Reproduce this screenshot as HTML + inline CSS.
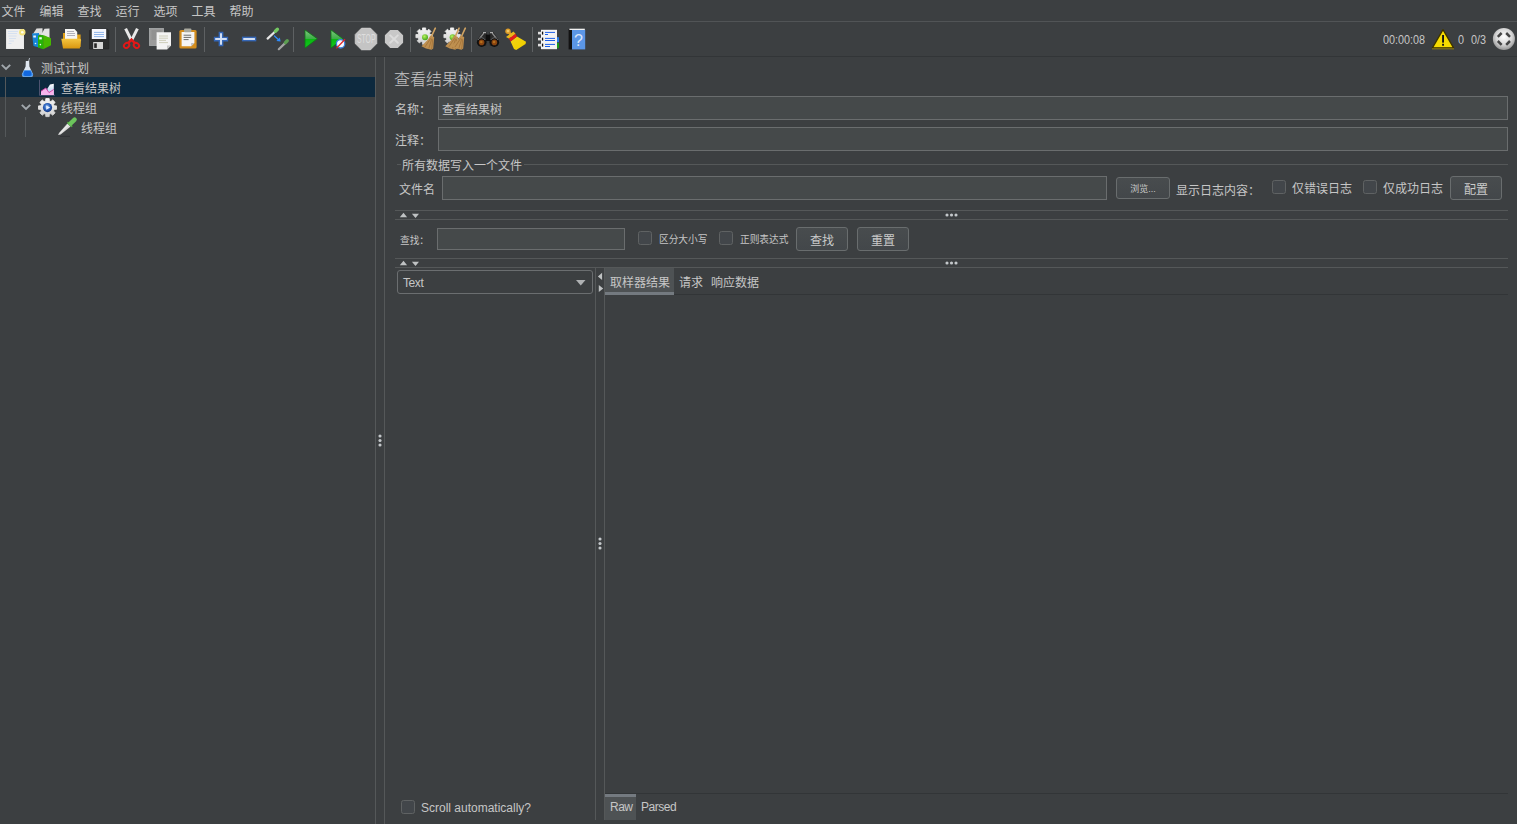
<!DOCTYPE html>
<html lang="zh-CN">
<head>
<meta charset="utf-8">
<title>Apache JMeter</title>
<style>
*{box-sizing:border-box;margin:0;padding:0}
html,body{width:1517px;height:824px;overflow:hidden;background:#3c3f41}
body{position:relative;font-family:"Liberation Sans","Noto Sans CJK SC",sans-serif;font-size:12px;color:#c6c6c6;line-height:1}
.abs{position:absolute}
.t{position:absolute;white-space:nowrap;line-height:16px;height:16px}
.hl{position:absolute;height:1px;background:#555859}
.vl{position:absolute;width:1px;background:#555859}
.inp{position:absolute;background:#45494a;border:1px solid #6a6d6e}
.btn{position:absolute;border:1px solid #696d6e;border-radius:3px;background:linear-gradient(#484c4e,#43474a);text-align:center;color:#cacaca}
.cb{position:absolute;width:14px;height:14px;border:1px solid #5f6263;border-radius:2.5px;background:#42464a}
.ico{position:absolute;overflow:visible}
#menubar{left:0;top:0;width:1517px;height:21px}
#menubar span{position:absolute;top:4px;margin-left:-0.5px;line-height:16px;font-size:12px}
</style>
</head>
<body>

<!-- MENU BAR -->
<div id="menubar" class="abs">
<span style="left:2px">文件</span>
<span style="left:40px">编辑</span>
<span style="left:78px">查找</span>
<span style="left:116px">运行</span>
<span style="left:154px">选项</span>
<span style="left:192px">工具</span>
<span style="left:230px">帮助</span>
</div>
<div class="hl" style="left:0;top:21px;width:1517px;background:#515456"></div>

<!-- TOOLBAR -->
<div id="toolbar" class="abs" style="left:0;top:22px;width:1517px;height:34px"></div>
<div class="hl" style="left:0;top:56px;width:1517px;background:#323537"></div>

<!-- TREE -->
<div id="tree" class="abs" style="left:0;top:57px;width:375px;height:767px">
  <div class="abs" style="left:0;top:20px;width:375px;height:20px;background:#0d293e"></div>
  <div class="vl" style="left:5px;top:20px;height:60px;background:#54585a"></div>
  <div class="vl" style="left:25px;top:60px;height:20px;background:#54585a"></div>
  <div class="t" style="left:41px;top:4px">测试计划</div>
  <div class="t" style="left:61px;top:24px">查看结果树</div>
  <div class="t" style="left:61px;top:44px">线程组</div>
  <div class="t" style="left:81px;top:64px">线程组</div>
</div>
<div class="vl" style="left:375px;top:57px;height:767px"></div>
<div class="vl" style="left:384px;top:57px;height:767px"></div>

<!-- RIGHT PANEL -->
<div class="t" style="left:394px;top:69px;font-size:16px;line-height:22px;height:22px;font-weight:300">查看结果树</div>
<div class="t" style="left:395px;top:102px">名称：</div>
<div class="inp" style="left:438px;top:96px;width:1070px;height:24px"></div>
<div class="t" style="left:442px;top:102px">查看结果树</div>
<div class="t" style="left:395px;top:133px">注释：</div>
<div class="inp" style="left:438px;top:127px;width:1070px;height:24px"></div>

<!-- titled border: write all data to file -->
<div class="hl" style="left:397px;top:164px;width:4px"></div>
<div class="hl" style="left:524px;top:164px;width:984px"></div>
<div class="t" style="left:402px;top:157.5px">所有数据写入一个文件</div>
<div class="t" style="left:399px;top:181.5px">文件名</div>
<div class="inp" style="left:442px;top:176px;width:665px;height:24px"></div>
<div class="btn" style="left:1116px;top:177px;width:54px;height:22px;font-size:9px;line-height:22px;overflow:hidden">浏览...</div>
<div class="t" style="left:1176px;top:182.5px">显示日志内容：</div>
<div class="cb" style="left:1272px;top:180px"></div>
<div class="t" style="left:1292px;top:181px">仅错误日志</div>
<div class="cb" style="left:1363px;top:180px"></div>
<div class="t" style="left:1383px;top:181px">仅成功日志</div>
<div class="btn" style="left:1450px;top:176px;width:52px;height:24px;line-height:26px;overflow:hidden">配置</div>

<!-- split divider 1 -->
<div class="hl" style="left:395px;top:210px;width:1113px"></div>
<div class="hl" style="left:395px;top:219px;width:1113px"></div>
<svg class="ico" style="left:399px;top:212px" width="22" height="7" viewBox="0 0 22 7"><path d="M0.8 5.2 L4.5 0.8 L8.1 5.2Z M12.9 1.7 L20 1.7 L16.5 6Z" fill="#bfc2c3"/></svg>
<svg class="ico" style="left:945px;top:213px" width="14" height="4" viewBox="0 0 14 4"><circle cx="2" cy="2" r="1.55" fill="#c4c8cb"/><circle cx="6.5" cy="2" r="1.55" fill="#c4c8cb"/><circle cx="11" cy="2" r="1.55" fill="#c4c8cb"/></svg>

<!-- search row -->
<div class="t" style="left:400px;top:232.5px;font-size:9.7px">查找：</div>
<div class="inp" style="left:437px;top:228px;width:188px;height:22px"></div>
<div class="cb" style="left:638px;top:231px"></div>
<div class="t" style="left:659px;top:231.5px;font-size:9.7px">区分大小写</div>
<div class="cb" style="left:719px;top:231px"></div>
<div class="t" style="left:740px;top:231.5px;font-size:9.7px">正则表达式</div>
<div class="btn" style="left:796px;top:227px;width:52px;height:24px;line-height:26px;overflow:hidden">查找</div>
<div class="btn" style="left:857px;top:227px;width:52px;height:24px;line-height:26px;overflow:hidden">重置</div>

<!-- split divider 2 -->
<div class="hl" style="left:395px;top:258px;width:1113px"></div>
<div class="hl" style="left:395px;top:267px;width:1113px"></div>
<svg class="ico" style="left:399px;top:260px" width="22" height="7" viewBox="0 0 22 7"><path d="M0.8 5.2 L4.5 0.8 L8.1 5.2Z M12.9 1.7 L20 1.7 L16.5 6Z" fill="#bfc2c3"/></svg>
<svg class="ico" style="left:945px;top:261px" width="14" height="4" viewBox="0 0 14 4"><circle cx="2" cy="2" r="1.55" fill="#c4c8cb"/><circle cx="6.5" cy="2" r="1.55" fill="#c4c8cb"/><circle cx="11" cy="2" r="1.55" fill="#c4c8cb"/></svg>

<!-- combo -->
<div class="abs" style="left:397px;top:270px;width:196px;height:24px;border:1px solid #6b6e70;border-radius:3px;background:#3c3f41"></div>
<div class="t" style="left:403px;top:275px;letter-spacing:-0.4px">Text</div>
<svg class="ico" style="left:576px;top:280px" width="10" height="6" viewBox="0 0 10 6"><path d="M0 0 L9.5 0 L4.75 5.5Z" fill="#afb1b3"/></svg>

<!-- vertical split -->
<div class="vl" style="left:595px;top:268px;height:552px"></div>
<div class="vl" style="left:604px;top:268px;height:552px"></div>
<svg class="ico" style="left:597px;top:271px" width="7" height="22" viewBox="0 0 7 22"><path d="M5.1 1.8 L5.1 9 L0.9 5.4Z M1.8 14 L1.8 21 L6.2 17.5Z" fill="#bfc2c3"/></svg>

<!-- tabs -->
<div class="abs" style="left:605px;top:268px;width:69px;height:27px;background:#4e5254"></div>
<div class="abs" style="left:605px;top:292px;width:69px;height:3px;background:#747a80"></div>
<div class="hl" style="left:674px;top:294px;width:834px;background:#323537"></div>
<div class="t" style="left:610px;top:275px">取样器结果</div>
<div class="t" style="left:679px;top:275px">请求</div>
<div class="t" style="left:711px;top:275px">响应数据</div>

<!-- bottom tabs -->
<div class="hl" style="left:605px;top:793px;width:903px;background:#323537"></div>
<div class="abs" style="left:605px;top:794px;width:31px;height:26px;background:#4e5254"></div>
<div class="abs" style="left:605px;top:794px;width:31px;height:3px;background:#747a80"></div>
<div class="t" style="left:610px;top:799px;letter-spacing:-0.5px">Raw</div>
<div class="t" style="left:641px;top:799px;letter-spacing:-0.45px">Parsed</div>

<div class="cb" style="left:401px;top:800px"></div>
<div class="t" style="left:421px;top:800px">Scroll automatically?</div>

<!-- splitter dots -->
<svg class="ico" style="left:378px;top:434px" width="4" height="13" viewBox="0 0 4 13"><circle cx="2" cy="2" r="1.55" fill="#c4c8cb"/><circle cx="2" cy="6.5" r="1.55" fill="#c4c8cb"/><circle cx="2" cy="11" r="1.55" fill="#c4c8cb"/></svg>
<svg class="ico" style="left:598px;top:537px" width="4" height="13" viewBox="0 0 4 13"><circle cx="2" cy="2" r="1.55" fill="#c4c8cb"/><circle cx="2" cy="6.5" r="1.55" fill="#c4c8cb"/><circle cx="2" cy="11" r="1.55" fill="#c4c8cb"/></svg>

<!-- status right -->
<div class="t" style="left:1383px;top:31.7px;font-size:12.5px;transform:scaleX(0.865);transform-origin:0 0">00:00:08</div>
<div class="t" style="left:1458px;top:31.7px;font-size:12.5px;transform:scaleX(0.865);transform-origin:0 0">0</div>
<div class="t" style="left:1471px;top:31.7px;font-size:12.5px;transform:scaleX(0.865);transform-origin:0 0">0/3</div>

<!-- ICONS -->
<svg class="ico" style="left:0;top:0" width="1517" height="140" viewBox="0 0 1517 140">
<defs>
<linearGradient id="gPlay" x1="0" y1="0" x2="0" y2="1"><stop offset="0" stop-color="#80c880"/><stop offset="0.48" stop-color="#3cae46"/><stop offset="0.52" stop-color="#0ab812"/><stop offset="1" stop-color="#12c81e"/></linearGradient>
<linearGradient id="gFold" x1="0" y1="0" x2="0" y2="1"><stop offset="0" stop-color="#f4c540"/><stop offset="1" stop-color="#d9960f"/></linearGradient>
<linearGradient id="gBroom" x1="0" y1="0" x2="1" y2="1"><stop offset="0" stop-color="#f2d21a"/><stop offset="0.7" stop-color="#f0d000"/><stop offset="1" stop-color="#d0a000"/></linearGradient>
<radialGradient id="gBall" cx="0.45" cy="0.4" r="0.6"><stop offset="0" stop-color="#9cc4f4"/><stop offset="0.5" stop-color="#2f66c0"/><stop offset="1" stop-color="#10337e"/></radialGradient>
<radialGradient id="gSph" cx="0.5" cy="0.4" r="0.6"><stop offset="0" stop-color="#ffffff"/><stop offset="0.6" stop-color="#d6d6d6"/><stop offset="1" stop-color="#969696"/></radialGradient>
<radialGradient id="gGreen" cx="0.4" cy="0.35" r="0.7"><stop offset="0" stop-color="#b8f060"/><stop offset="1" stop-color="#3aa010"/></radialGradient>
<linearGradient id="gBlueA" x1="0" y1="0" x2="0" y2="1"><stop offset="0" stop-color="#ffffff"/><stop offset="1" stop-color="#9cc0ee"/></linearGradient>
<linearGradient id="gGear" x1="0" y1="0" x2="0" y2="1"><stop offset="0" stop-color="#f4f4f4"/><stop offset="1" stop-color="#d0d0d0"/></linearGradient>
</defs>
<rect x="115.0" y="27" width="1" height="25" fill="#5e6163"/>
<rect x="204.0" y="27" width="1" height="25" fill="#5e6163"/>
<rect x="293.0" y="27" width="1" height="25" fill="#5e6163"/>
<rect x="410.0" y="27" width="1" height="25" fill="#5e6163"/>
<rect x="471.0" y="27" width="1" height="25" fill="#5e6163"/>
<rect x="532.0" y="27" width="1" height="25" fill="#5e6163"/>
<g><rect x="6.6" y="29.4" width="17" height="19.2" fill="#efefef" stroke="#fafafa" stroke-width="0.8"/><path d="M8 31.5h10M8 33.5h9M8.5 36h8M9 38.5h7M9 41h5M8.5 43.5h3" stroke="#d3dff0" stroke-width="0.9"/><circle cx="22.3" cy="32.3" r="3.2" fill="#f3e27a"/><circle cx="22.3" cy="32.3" r="1.3" fill="#fffef0"/></g>
<g><polygon points="33,34 36.5,28.5 42.5,28.2 42.5,35" fill="#dcdcdc"/><polygon points="41,35 44.5,28.8 49.5,28.5 49.5,38" fill="#e4e4e4"/><polygon points="32,33.5 39,33 39,47.5 33.5,46" fill="#1686d8"/><rect x="33.3" y="35.5" width="2.6" height="2" fill="#e8f2ff"/><circle cx="35.5" cy="43.5" r="0.8" fill="#e8f2ff"/><polygon points="38,35.5 43.2,35 43.2,49.2 38,47.6" fill="#27b408"/><polygon points="43.2,35 51,38.3 51,45.2 43.2,49.2" fill="#46b800"/><rect x="39.2" y="37.2" width="2.6" height="2.2" fill="#eaffea"/><circle cx="40.4" cy="44.6" r="0.8" fill="#eaffea"/></g>
<g><polygon points="63,33 68,33 69,34.5 80.6,34.5 80.6,47 63,47" fill="#dfa018"/><polygon points="65,29 74.5,29 77.2,32 77.2,41 65,41" fill="#f6f6f6"/><path d="M67 31.5h7M67 33.5h8M67 35.5h8" stroke="#a9a9b4" stroke-width="0.9"/><path d="M61.3,38.8 L79.8,38.8 Q81.2,38.8 81,40.2 L79.8,48.6 L63,48.6 Z" fill="url(#gFold)"/></g>
<g><path d="M89.5,30.5 L91,29.2 L107.5,29.2 L108.8,30.5 L108.8,49 L89.5,49 Z" fill="#2c2d2e" stroke="#232425" stroke-width="0.6"/><rect x="91.8" y="29" width="14.4" height="10" fill="#f5f7fd"/><path d="M94 32.4h10M94 34.5h10M94 36.6h10" stroke="#8fb4ea" stroke-width="1"/><rect x="93.2" y="42" width="9.8" height="7" fill="#d6d6d6"/><rect x="94.2" y="43.3" width="2.6" height="4.6" fill="#252525"/></g>
<g fill="none"><path d="M125.6,28.6 L131.6,40.6" stroke="#e8e8e8" stroke-width="3"/><path d="M137.4,28.6 L131.4,40.6" stroke="#e8e8e8" stroke-width="3"/><path d="M131.5,39.6 L128.6,42.6 M131.5,39.6 L134.4,42.6" stroke="#e01818" stroke-width="2.4" stroke-linecap="round"/><ellipse cx="126.6" cy="45.4" rx="2.9" ry="2.3" transform="rotate(-40 126.6 45.4)" stroke="#e01818" stroke-width="1.9"/><ellipse cx="136.4" cy="45.4" rx="2.9" ry="2.3" transform="rotate(40 136.4 45.4)" stroke="#e01818" stroke-width="1.9"/></g>
<g><rect x="149.5" y="28.5" width="14" height="17" fill="#9b9b9b" stroke="#b4b8b8" stroke-width="0.7"/><path d="M151.5 31h10M151.5 33h10M151.5 35h10M151.5 37h5M151.5 39h5" stroke="#878787" stroke-width="0.9"/><polygon points="156.6,32.2 171,32.2 171,45.5 167,49.6 156.6,49.6" fill="#f3f3f3"/><polygon points="167,45.5 171,45.5 167,49.6" fill="#c4c4c4"/><path d="M159 36h9M159 38.2h9M159 40.4h7M159 42.6h9" stroke="#c9c9b4" stroke-width="0.9"/></g>
<g><rect x="179.4" y="30" width="17.2" height="18.5" rx="1.5" fill="#d38d1e"/><polygon points="181.6,32 194.4,32 194.4,43 191.2,46.3 181.6,46.3" fill="#f5f5f5"/><polygon points="191.2,43 194.4,43 191.2,46.3" fill="#bdbdbd"/><rect x="184" y="28.4" width="7.4" height="3.8" rx="1" fill="#a9a99f"/><path d="M183.6 35.2h7.6M183.6 37.4h7.6M183.6 39.6h5" stroke="#6c6c6c" stroke-width="1"/></g>
<path d="M219.3,32.5 H222.7 V37.3 H227.5 V40.7 H222.7 V45.5 H219.3 V40.7 H214.5 V37.3 H219.3 Z" fill="#d2dff3" stroke="#3466b6" stroke-width="1.35"/>
<rect x="242.6" y="37.3" width="13" height="3.4" fill="#d2dff3" stroke="#3466b6" stroke-width="1.35"/>
<g fill="none" stroke-linecap="round"><path d="M267.6,38.6 L274.4,32.2" stroke="#e6e6e6" stroke-width="2.2"/><path d="M275.4,31.2 L277.4,29.2" stroke="#74c862" stroke-width="3.4"/><path d="M274.5,36 L278.5,39.8" stroke="#2e8cff" stroke-width="1.2"/><polygon points="280.6,41.6 276.4,41 279.8,37.4" fill="#2e8cff" stroke="none"/><path d="M278.8,49.2 L284.6,43.6" stroke="#a4a4a4" stroke-width="2.2"/><path d="M285.4,42.6 L287.2,40.8" stroke="#5c9e52" stroke-width="3.4"/></g>
<polygon points="305,30 317.3,38.7 305,48.1" fill="url(#gPlay)" stroke="#0c7a14" stroke-width="0.8" stroke-linejoin="round"/>
<g><polygon points="331,30 342.8,38.7 331,48.1" fill="url(#gPlay)" stroke="#0c7a14" stroke-width="0.8" stroke-linejoin="round"/><circle cx="340.6" cy="43.8" r="4.2" fill="#f4f8ff" stroke="#3a80da" stroke-width="1.3"/><path d="M336.4,48.4 L345,39.2" stroke="#e02424" stroke-width="1.3"/></g>
<g><polygon points="361.5,28.1 370.5,28.1 376.9,34.5 376.9,43.5 370.5,49.9 361.5,49.9 355.1,43.5 355.1,34.5" fill="#c4c4c4" stroke="#cecece" stroke-width="0.6"/><text x="366.2" y="43.3" text-anchor="middle" font-family="Liberation Sans, sans-serif" font-size="12.4" fill="#dedede" textLength="18.6" lengthAdjust="spacingAndGlyphs">STOP</text></g>
<g><polygon points="390.2,29.9 397.8,29.9 403.1,35.2 403.1,42.8 397.8,48.1 390.2,48.1 384.9,42.8 384.9,35.2" fill="#c8c8c8"/><path d="M390.2,35.4 L397.8,42.8 M397.8,35.4 L390.2,42.8" stroke="#dcdcdc" stroke-width="2" stroke-linecap="round"/></g>
<g><polygon points="430.1,34.5 432.3,34.5 432.3,37.7 430.1,37.7 429.5,39.2 431.0,40.8 428.8,43.0 427.2,41.5 425.7,42.1 425.7,44.3 422.5,44.3 422.5,42.1 421.0,41.5 419.4,43.0 417.2,40.8 418.7,39.2 418.1,37.7 415.9,37.7 415.9,34.5 418.1,34.5 418.7,33.0 417.2,31.4 419.4,29.2 421.0,30.7 422.5,30.1 422.5,27.9 425.7,27.9 425.7,30.1 427.2,30.7 428.8,29.2 431.0,31.4 429.5,33.0" fill="url(#gGear)" stroke="url(#gGear)" stroke-width="0.8" stroke-linejoin="round"/><circle cx="425" cy="37.3" r="3" fill="url(#gGreen)"/><path d="M435.3,28.2 L431.5,36.4" stroke="#cfa262" stroke-width="1.6" stroke-linecap="round"/><polygon points="430.5,35.5 434.2,37.0 433.2,48.5 431.5,49.7 426.0,48.5 421.5,46.2 428.0,39.5" fill="#bf9050"/><path d="M430.8,38.2 L424.8,47.2 M431.8,38.7 L428.8,48.5 M432.7,39.2 L431.7,49.0" stroke="#9c6c34" stroke-width="0.7" fill="none"/></g>
<g><polygon points="458.1,34.5 460.3,34.5 460.3,37.7 458.1,37.7 457.5,39.2 459.0,40.8 456.8,43.0 455.2,41.5 453.7,42.1 453.7,44.3 450.5,44.3 450.5,42.1 449.0,41.5 447.4,43.0 445.2,40.8 446.7,39.2 446.1,37.7 443.9,37.7 443.9,34.5 446.1,34.5 446.7,33.0 445.2,31.4 447.4,29.2 449.0,30.7 450.5,30.1 450.5,27.9 453.7,27.9 453.7,30.1 455.2,30.7 456.8,29.2 459.0,31.4 457.5,33.0" fill="url(#gGear)" stroke="url(#gGear)" stroke-width="0.8" stroke-linejoin="round"/><circle cx="452.6" cy="37.3" r="3" fill="url(#gGreen)"/><path d="M459.1,28.2 L455.3,36.4" stroke="#cfa262" stroke-width="1.6" stroke-linecap="round"/><polygon points="454.3,35.5 458.0,37.0 457.0,48.5 455.3,49.7 449.8,48.5 445.3,46.2 451.8,39.5" fill="#bf9050"/><path d="M454.6,38.2 L448.6,47.2 M455.6,38.7 L452.6,48.5 M456.5,39.2 L455.5,49.0" stroke="#9c6c34" stroke-width="0.7" fill="none"/><path d="M465.3,28.2 L461.5,36.4" stroke="#cfa262" stroke-width="1.6" stroke-linecap="round"/><polygon points="460.5,35.5 464.2,37.0 463.2,48.5 461.5,49.7 456.0,48.5 451.5,46.2 458.0,39.5" fill="#bf9050"/><path d="M460.8,38.2 L454.8,47.2 M461.8,38.7 L458.8,48.5 M462.7,39.2 L461.7,49.0" stroke="#9c6c34" stroke-width="0.7" fill="none"/></g>
<g><polygon points="482.6,32 486.4,32 487.6,38.5 486,46 477.4,44 478.2,38.5" fill="#2a2a2a"/><polygon points="493.4,32 489.6,32 488.4,38.5 490,46 498.6,44 497.8,38.5" fill="#2a2a2a"/><rect x="485.8" y="34.6" width="4.4" height="6.4" fill="#0e0e0e"/><path d="M480.2,37.6 L483.4,33.6 M495.8,37.6 L492.6,33.6" stroke="#8c8c8c" stroke-width="1.4" fill="none" stroke-linecap="round"/><path d="M483,32.7 h3 M490,32.7 h3" stroke="#c8c8c8" stroke-width="1"/><circle cx="481.6" cy="42.2" r="4.7" fill="#101010"/><circle cx="494.4" cy="42.2" r="4.7" fill="#101010"/><circle cx="481.6" cy="42.4" r="2.8" fill="#8a4410"/><circle cx="494.4" cy="42.4" r="2.8" fill="#8a4410"/><circle cx="481.3" cy="42" r="1.3" fill="#b4701c"/><circle cx="494.1" cy="42" r="1.3" fill="#b4701c"/><path d="M478,40 A4,4 0 0 1 485.2,40 M490.8,40 A4,4 0 0 1 498,40" stroke="#8c8c8c" stroke-width="0.7" fill="none"/></g>
<g><path d="M508.6,32 L512,36" stroke="#dca21c" stroke-width="2.6" stroke-linecap="round"/><circle cx="508" cy="31.3" r="2.7" fill="#dc9a26"/><circle cx="508" cy="31.1" r="1.4" fill="#f0c868"/><polygon points="510.6,41.4 517,36.6 526,41.8 525.6,44 516.2,50 514,49" fill="url(#gBroom)"/><polygon points="508.8,38.6 515.5,33.8 517,36.6 510.6,41.4" fill="#e41c1c"/><polygon points="506,37 513.4,31.4 515.5,33.8 508.8,38.6" fill="#e8b61c"/></g>
<g><rect x="541" y="29.8" width="16" height="19.4" fill="#f3f3f3"/><g fill="#dedede"><rect x="538" y="31.8" width="5.4" height="2.6"/><rect x="538" y="37.8" width="5.4" height="2.6"/><rect x="538" y="43.8" width="5.4" height="2.6"/></g><g fill="#111"><rect x="542" y="31.6" width="1.2" height="3"/><rect x="542" y="37.6" width="1.2" height="3"/><rect x="542" y="43.6" width="1.2" height="3"/></g><path d="M545 32.4h10M545 34.5h3M545 38.4h10M545 40.5h10M545 44.4h10M545 46.5h5" stroke="#1c60ea" stroke-width="1"/><rect x="557" y="37.2" width="2" height="5" fill="#2a7ce8"/><rect x="557" y="43" width="2" height="5.2" fill="#18981a"/></g>
<g><rect x="568.6" y="29" width="3.6" height="20.4" fill="#121212"/><rect x="572" y="29.8" width="13.2" height="19.6" fill="#5b96e6"/><rect x="569.4" y="28.7" width="15.4" height="1.3" fill="#f2f2f2"/><text x="578.4" y="46.4" text-anchor="middle" font-family="Liberation Sans, sans-serif" font-size="16" fill="#e8effc" fill-opacity="0.92">?</text></g>
<g><polygon points="1443,29.6 1453.6,47.8 1432.4,47.8" fill="#f7dc00" stroke="#3c3300" stroke-width="1.3" stroke-linejoin="round"/><rect x="1442.1" y="35" width="1.9" height="7.6" fill="#141414"/><rect x="1442.1" y="43.8" width="1.9" height="1.9" fill="#141414"/><rect x="1432" y="48.4" width="22" height="0.9" fill="#a08810"/></g>
<g><circle cx="1503.9" cy="38.9" r="11" fill="url(#gSph)"/><g stroke="#444" stroke-width="2.5" fill="none"><path d="M1497.8,36.8 L1501.6,33"/><path d="M1506.2,33 L1510,36.8"/><path d="M1510,41 L1506.2,44.8"/><path d="M1501.6,44.8 L1497.8,41"/></g></g>
<polyline points="1.8,64.8 6,69 10.2,64.8" fill="none" stroke="#a2a8ad" stroke-width="1.9"/>
<polyline points="21.8,104.8 26,109 30.2,104.8" fill="none" stroke="#a2a8ad" stroke-width="1.9"/>
<g><path d="M29.6,58 L28.2,62.5" stroke="#b8c0c8" stroke-width="0.9"/><path d="M25.8,61 L29.2,61 L29.4,66.5 L33,74.2 Q33.4,76.8 30.5,76.8 L24.5,76.8 Q21.6,76.8 22,74.2 L25.6,66.5 Z" fill="#dfe6f0"/><path d="M23.9,70.2 L31.1,70.2 L33,74.2 Q33.4,76.8 30.5,76.8 L24.5,76.8 Q21.6,76.8 22,74.2 Z" fill="#4a98ee"/><path d="M24.6,70.8 L30.4,70.8 L31.6,74 Q31.6,76 29.8,76 L25.2,76 Q23.4,76 23.4,74 Z" fill="#1268e0"/></g>
<g><path d="M39.5,79.8 V95.3 H55" stroke="#5f5e7e" stroke-width="0.8" fill="none"/><polygon points="46.5,95 47.5,88.5 50,84.6 53.8,83.8 53.8,95" fill="url(#gBlueA)"/><polygon points="41,95 41,91.2 45.8,88 49,92.6 53.8,89.4 53.8,95" fill="#f6b4ec"/><polyline points="41,91.2 45.8,88 49,92.6 53.8,89.4" fill="none" stroke="#d23ea4" stroke-width="0.9"/></g>
<g><polygon points="54.2,105.8 56.5,105.9 56.5,109.3 54.2,109.4 53.5,111.0 55.1,112.8 52.7,115.2 50.9,113.6 49.3,114.3 49.2,116.6 45.8,116.6 45.7,114.3 44.1,113.6 42.3,115.2 39.9,112.8 41.5,111.0 40.8,109.4 38.5,109.3 38.5,105.9 40.8,105.8 41.5,104.2 39.9,102.4 42.3,100.0 44.1,101.6 45.7,100.9 45.8,98.6 49.2,98.6 49.3,100.9 50.9,101.6 52.7,100.0 55.1,102.4 53.5,104.2" fill="url(#gGear)" stroke="url(#gGear)" stroke-width="0.9" stroke-linejoin="round"/><circle cx="47.5" cy="107.6" r="4.6" fill="url(#gBall)"/><polygon points="46.2,105.4 50.2,107.6 46.2,109.8" fill="#e6efff"/></g>
<g><polygon points="58.1,135 59,133 67.4,123.4 70.6,126.4 60.6,134.4" fill="#dadada"/><path d="M60.4,133 L68.4,124.8" stroke="#f4f4f4" stroke-width="0.9" fill="none"/><path d="M68,122.6 L71.6,126.2" stroke="#4ea83e" stroke-width="1.8" stroke-linecap="round" fill="none"/><path d="M70.4,123.6 L74.6,119.6" stroke="#6cc45c" stroke-width="4.4" stroke-linecap="round" fill="none"/><path d="M60,136.4 h10" stroke="#2f3133" stroke-width="0.9" fill="none"/></g>
</svg>
</body>
</html>
